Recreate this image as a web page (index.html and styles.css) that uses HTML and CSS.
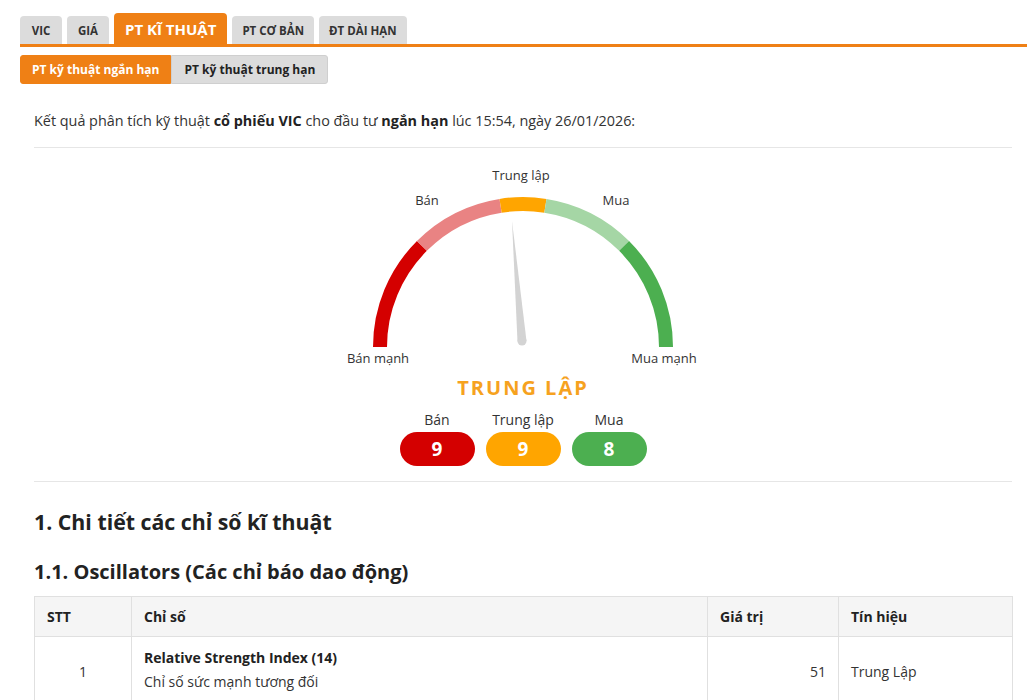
FILE: index.html
```html
<!DOCTYPE html>
<html lang="vi">
<head>
<meta charset="utf-8">
<title>PT kỹ thuật VIC</title>
<link rel="stylesheet" href="styles.css">
</head>
<body>
<div class="wrap">
  <div class="tabs">
    <div class="tab">VIC</div>
    <div class="tab">GIÁ</div>
    <div class="tab active">PT KĨ THUẬT</div>
    <div class="tab">PT CƠ BẢN</div>
    <div class="tab">ĐT DÀI HẠN</div>
  </div>
  <div class="subtabs">
    <div class="subtab active">PT kỹ thuật ngắn hạn</div>
    <div class="subtab">PT kỹ thuật trung hạn</div>
  </div>
  <div class="content">
    <p class="intro">Kết quả phân tích kỹ thuật <b>cổ phiếu VIC</b> cho đầu tư <b>ngắn hạn</b> lúc 15:54, ngày 26/01/2026:</p>
    <div class="rule"></div>
    <div class="gauge-box">
      <svg class="gauge" width="400" height="212" viewBox="0 0 400 212">
        <path d="M57 187 A143 143 0 0 1 98.9 85.9" class="seg s1"/>
        <path d="M98.9 85.9 A143 143 0 0 1 177.6 45.8" class="seg s2"/>
        <path d="M177.6 45.8 A143 143 0 0 1 222.4 45.8" class="seg s3"/>
        <path d="M222.4 45.8 A143 143 0 0 1 301.1 85.9" class="seg s4"/>
        <path d="M301.1 85.9 A143 143 0 0 1 343 187" class="seg s5"/>
        <polygon points="189,61 194.5,181.5 203.5,181" class="needle"/>
        <circle cx="199" cy="181" r="4.5" class="needle"/>
        <text x="198" y="20" class="glabel">Trung lập</text>
        <text x="104" y="45" class="glabel">Bán</text>
        <text x="293" y="45" class="glabel">Mua</text>
        <text x="55" y="203" class="glabel">Bán mạnh</text>
        <text x="341" y="203" class="glabel">Mua mạnh</text>
      </svg>
      <div class="status">TRUNG LẬP</div>
      <div class="counts">
        <div class="count">
          <div class="count-label">Bán</div>
          <div class="pill red">9</div>
        </div>
        <div class="count">
          <div class="count-label">Trung lập</div>
          <div class="pill orange">9</div>
        </div>
        <div class="count">
          <div class="count-label">Mua</div>
          <div class="pill green">8</div>
        </div>
      </div>
    </div>
    <div class="rule"></div>
    <h2 class="h1">1. Chi tiết các chỉ số kĩ thuật</h2>
    <h3 class="h2">1.1. Oscillators (Các chỉ báo dao động)</h3>
    <table class="tbl">
      <colgroup>
        <col class="c1"><col class="c2"><col class="c3"><col class="c4">
      </colgroup>
      <thead>
        <tr><th>STT</th><th>Chỉ số</th><th>Giá trị</th><th>Tín hiệu</th></tr>
      </thead>
      <tbody>
        <tr>
          <td class="center">1</td>
          <td><div class="ind-name">Relative Strength Index (14)</div><div class="ind-desc">Chỉ số sức mạnh tương đối</div></td>
          <td class="right">51</td>
          <td>Trung Lập</td>
        </tr>
        <tr>
          <td class="center">2</td>
          <td><div class="ind-name">Stochastic %K (14, 3, 3)</div><div class="ind-desc">Dao động ngẫu nhiên</div></td>
          <td class="right">45</td>
          <td>Trung Lập</td>
        </tr>
      </tbody>
    </table>
  </div>
</div>
</body>
</html>
```
FILE: styles.css
```css
* { box-sizing: border-box; }
html, body { margin: 0; padding: 0; background: #fff; }
body {
  font-family: "Open Sans", "Noto Sans", sans-serif;
  font-size: 14px;
  color: #333;
}
.wrap {
  margin-left: 20px;
  width: 1007px;
  padding-top: 13px;
}
.tabs {
  display: flex;
  align-items: flex-end;
  gap: 5px;
  border-bottom: 3px solid #ef8015;
}
.tab {
  height: 28px;
  min-width: 42px;
  padding: 0 10px;
  background: #dcdcdc;
  border-radius: 4px 4px 0 0;
  font-size: 11.5px;
  font-weight: 700;
  color: #333;
  display: flex;
  align-items: center;
  justify-content: center;
}
.tab.active {
  height: 31px;
  background: #ef8015;
  color: #fff;
  font-size: 15px;
  padding: 0 11px;
}
.subtabs {
  display: flex;
  margin-top: 8px;
}
.subtab {
  height: 29px;
  padding: 0 12px;
  display: flex;
  align-items: center;
  font-size: 12px;
  font-weight: 700;
  background: #dcdcdc;
  color: #222;
  border: 1px solid #cfcfcf;
  border-radius: 0 3px 3px 0;
}
.subtab.active {
  padding: 0 11px;
  background: #ef8015;
  border-color: #ef8015;
  color: #fff;
  border-radius: 3px 0 0 3px;
}
.content {
  padding: 0 15px 0 14px;
}
.intro {
  margin: 27px 0 16px;
  line-height: 20px;
  font-size: 14.4px;
}
.intro b { color: #222; }
.rule {
  height: 1px;
  background: #e6e6e6;
}
.gauge-box {
  display: flex;
  flex-direction: column;
  align-items: center;
  padding-top: 12px;
  padding-bottom: 15px;
}
.gauge { display: block; }
.seg { fill: none; stroke-width: 14; }
.s1 { stroke: #d40000; }
.s2 { stroke: #e98383; }
.s3 { stroke: #ffa500; }
.s4 { stroke: #a5d6a5; }
.s5 { stroke: #4caf50; }
.needle { fill: #d3d3d3; }
.glabel {
  font-family: "Open Sans", "Noto Sans", sans-serif;
  font-size: 13px;
  fill: #333;
  text-anchor: middle;
}
.status {
  font-size: 20px;
  font-weight: 700;
  color: #f6a21e;
  letter-spacing: 2px;
  line-height: 28px;
  margin-top: 2px;
}
.counts {
  display: flex;
  gap: 11px;
  margin-top: 8px;
}
.count {
  display: flex;
  flex-direction: column;
  align-items: center;
  gap: 2px;
}
.count-label {
  font-size: 14px;
  line-height: 20px;
}
.pill {
  width: 75px;
  height: 34px;
  border-radius: 17px;
  color: #fff;
  font-weight: 700;
  font-size: 19px;
  display: flex;
  align-items: center;
  justify-content: center;
}
.pill.red { background: #d40000; }
.pill.orange { background: #ffa500; }
.pill.green { background: #4caf50; }
.h1 {
  margin: 25px 0 0;
  font-size: 21.3px;
  font-weight: 700;
  color: #222;
  line-height: 30px;
}
.h2 {
  margin: 21px 0 0;
  font-size: 20px;
  font-weight: 700;
  color: #222;
  line-height: 28px;
}
.tbl {
  margin-top: 10px;
  width: 978px;
  border-collapse: collapse;
  table-layout: fixed;
}
.c1 { width: 97px; }
.c2 { width: 576px; }
.c3 { width: 131px; }
.c4 { width: 174px; }
.tbl th, .tbl td {
  border: 1px solid #e0e0e0;
  padding: 0 12px;
  text-align: left;
}
.tbl th {
  height: 40px;
  background: #f5f5f5;
  font-weight: 700;
  color: #222;
  font-size: 14px;
}
.tbl td {
  height: 68px;
  padding-top: 10px;
  padding-bottom: 10px;
}
.tbl td.center { text-align: center; }
.tbl td.right { text-align: right; }
.ind-name { font-weight: 700; color: #222; line-height: 22px; }
.ind-desc { line-height: 26px; }
```
